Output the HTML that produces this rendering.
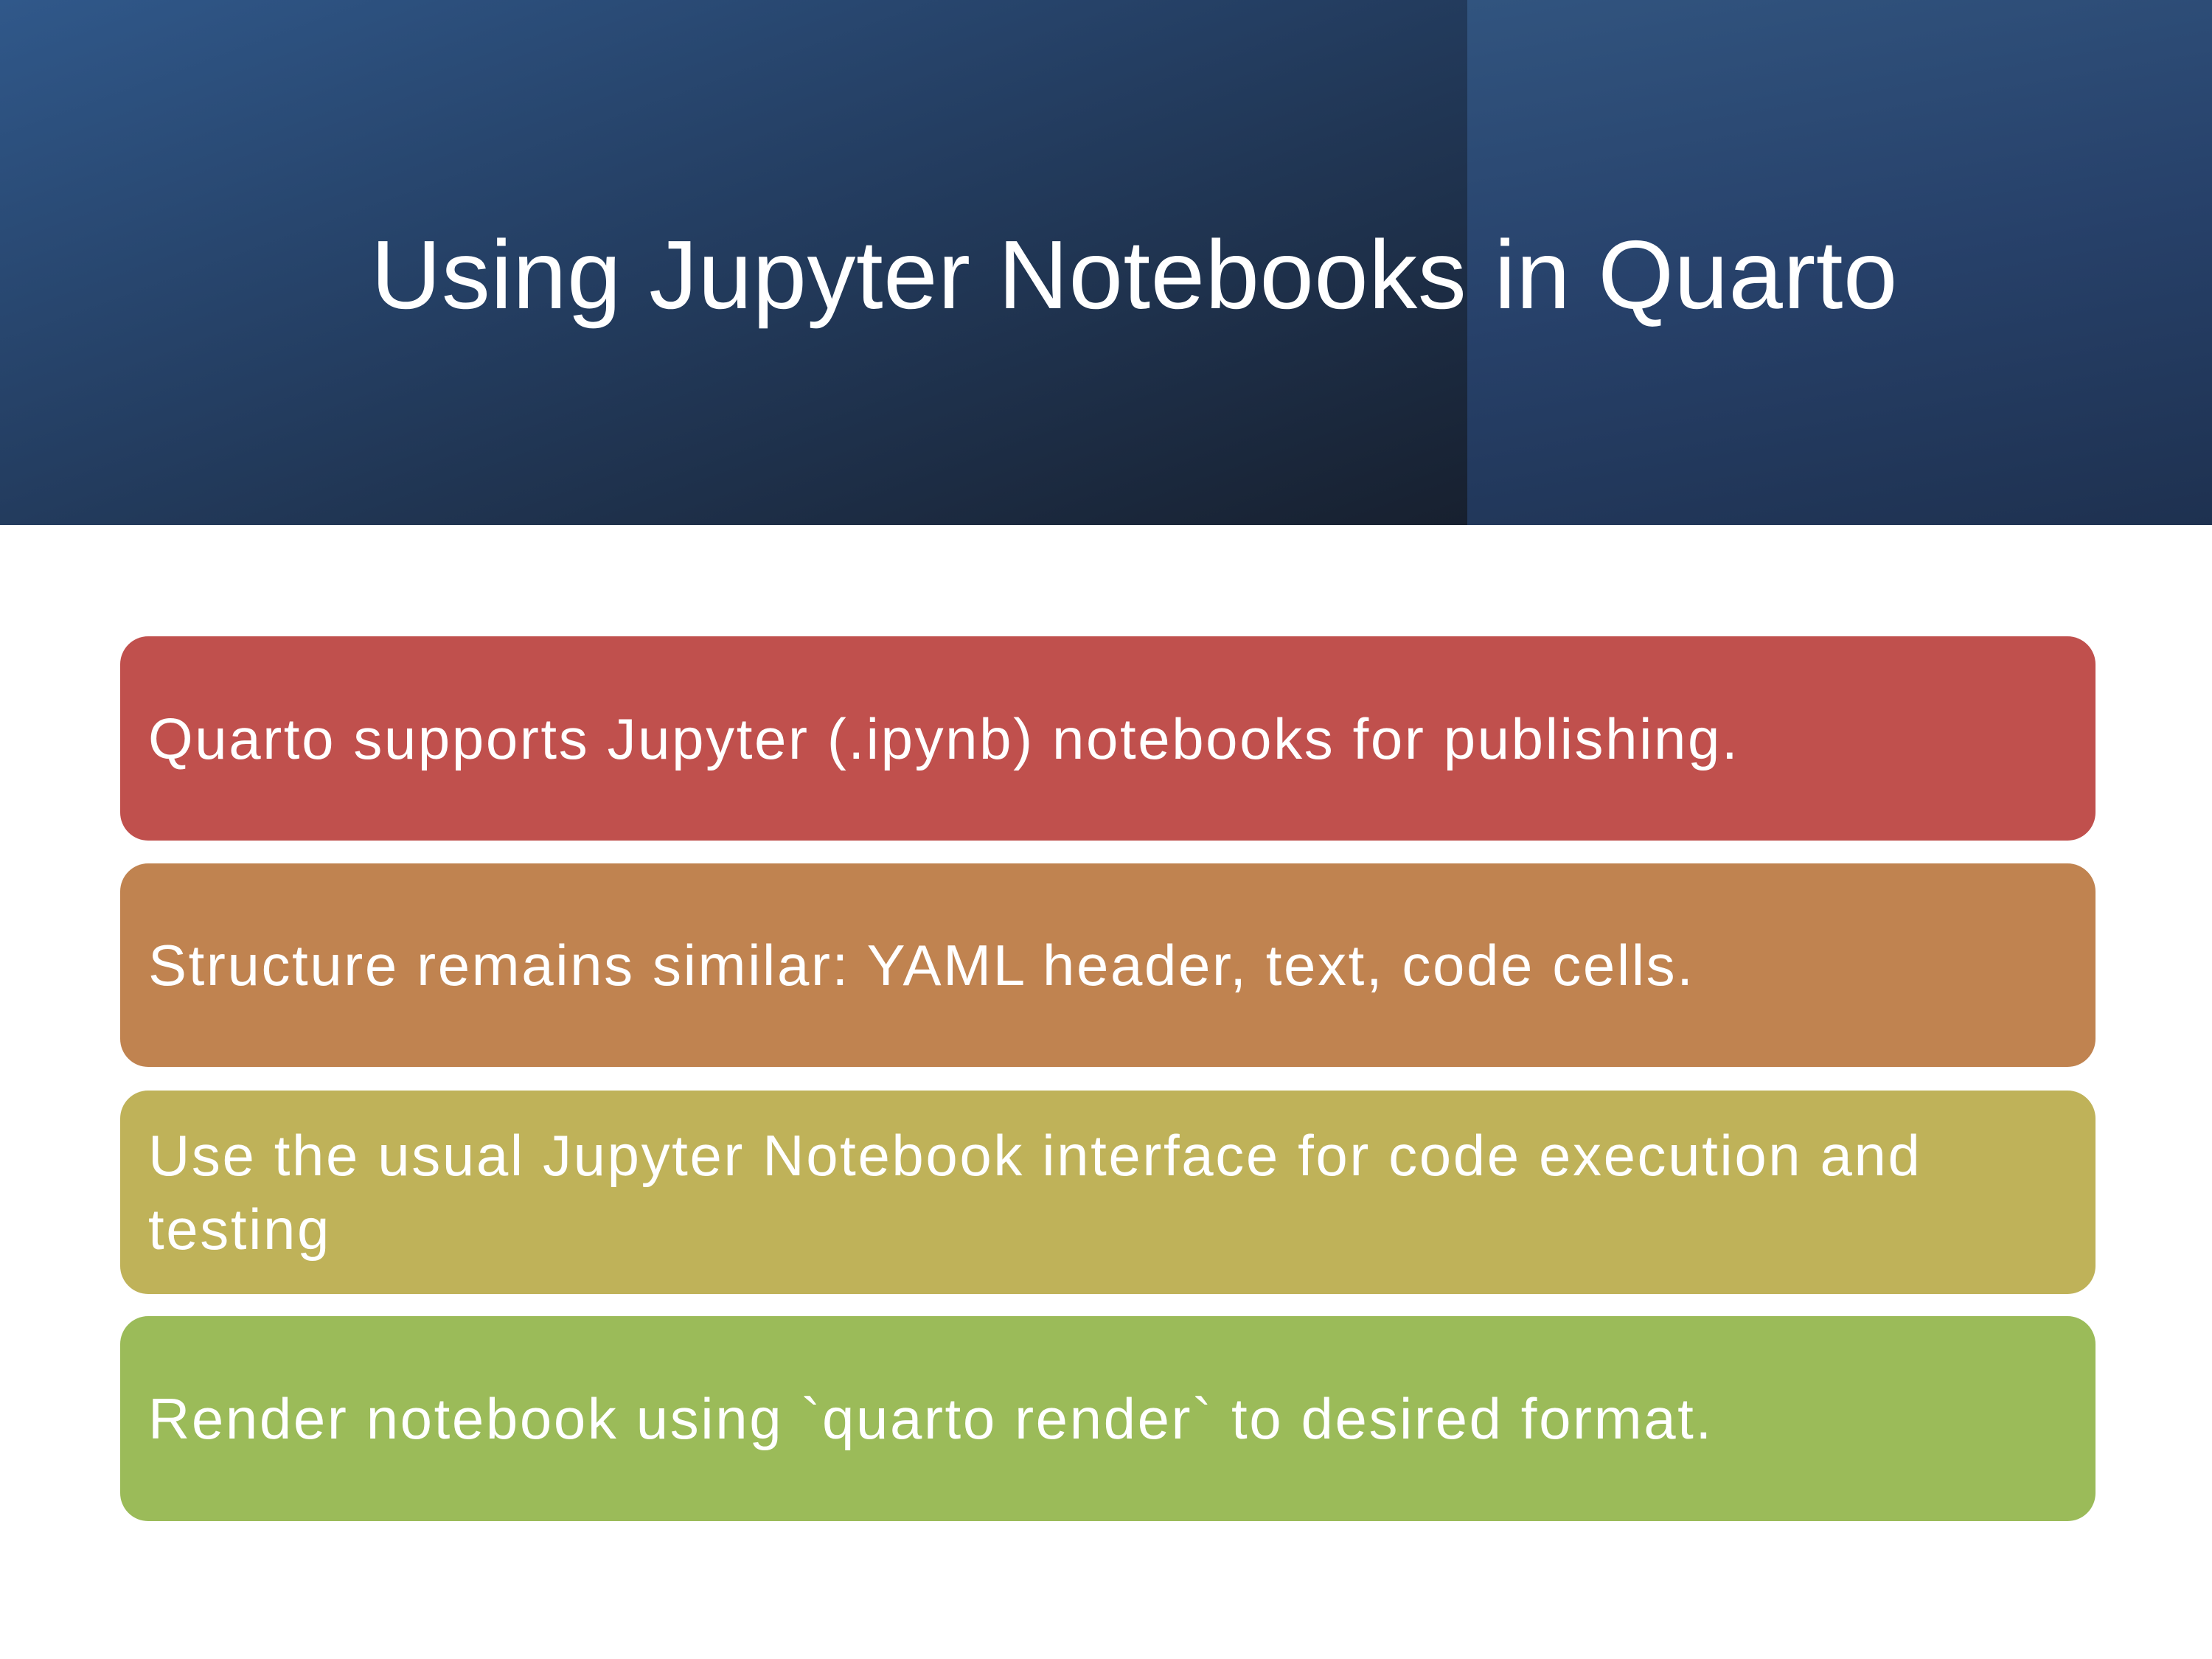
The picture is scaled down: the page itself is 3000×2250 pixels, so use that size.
<!DOCTYPE html>
<html><head><meta charset="utf-8"><style>
html,body{margin:0;padding:0;width:3000px;height:2250px;background:#fff;overflow:hidden;font-family:"Liberation Sans",sans-serif}
.hdr{position:absolute;left:0;top:0;width:1990px;height:712px;background:linear-gradient(160deg,#30588a 0%,#243e62 45%,#17202f 100%)}
.hdr2{position:absolute;left:1990px;top:0;width:1010px;height:712px;background:linear-gradient(170deg,#31547f 0%,#27416a 50%,#1e3150 100%)}
.title{position:absolute;left:0;top:288px;width:3000px;padding-left:503px;box-sizing:border-box;color:#fff;font-size:132px;line-height:170px;white-space:nowrap;letter-spacing:0.5px}
.box{position:absolute;left:163px;width:2679px;border-radius:38px;color:#fff;font-size:78px;line-height:100px;box-sizing:border-box;padding-left:38px;display:flex;align-items:center;letter-spacing:2.6px}
</style></head><body>
<div class="hdr"></div><div class="hdr2"></div>
<div class="title">Using Jupyter Notebooks in Quarto</div>
<div class="box" style="top:863px;height:277px;background:#c0504d">Quarto supports Jupyter (.ipynb) notebooks for publishing.</div>
<div class="box" style="top:1171px;height:276px;background:#c08350">Structure remains similar: YAML header, text, code cells.</div>
<div class="box" style="top:1479px;height:276px;background:#bfb259">Use the usual Jupyter Notebook interface for code execution and<br>testing</div>
<div class="box" style="top:1785px;height:278px;background:#9bbb59">Render notebook using `quarto render` to desired format.</div>
</body></html>
